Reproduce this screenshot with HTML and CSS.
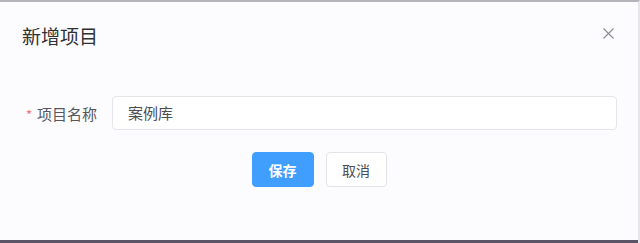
FILE: index.html
```html
<!DOCTYPE html>
<html lang="zh-CN">
<head>
<meta charset="utf-8">
<title>新增项目</title>
<link rel="stylesheet" href="styles.css">
</head>
<body>
<div class="dialog">
  <div class="dialog-header">
    <span class="dialog-title">新增项目</span>
    <button class="close-btn" aria-label="关闭">
      <svg width="11" height="11" viewBox="0 0 11 11"><path d="M0.5 0.5L10.5 10.5M10.5 0.5L0.5 10.5" stroke="#8a8c92" stroke-width="1.1" fill="none"/></svg>
    </button>
  </div>
  <div class="dialog-body">
    <div class="form-row">
      <label class="form-label"><span class="req">*</span>项目名称</label>
      <div class="input-box">案例库</div>
    </div>
  </div>
  <div class="dialog-footer">
    <button class="btn btn-primary">保存</button>
    <button class="btn btn-default">取消</button>
  </div>
  <div class="bottom-bar"></div>
</div>
</body>
</html>
```
FILE: styles.css
```css
html, body {
  margin: 0;
  padding: 0;
  background: #fcfcfe;
}
body {
  font-family: "Noto Sans CJK SC", "Noto Sans", sans-serif;
}
.dialog {
  width: 640px;
  height: 243px;
  box-sizing: border-box;
  border-top: 2px solid #b4b4bb;
  border-right: 2px solid #e6e6ea;
  background: #fcfcfe;
  display: flex;
  flex-direction: column;
}
.dialog-header {
  display: flex;
  justify-content: space-between;
  align-items: flex-start;
  padding: 18px 24px 0 22px;
}
.dialog-title {
  font-size: 19px;
  line-height: 32px;
  color: #303133;
}
.close-btn {
  border: 0;
  background: none;
  padding: 0;
  margin-top: 8px;
  width: 11px;
  height: 11px;
  display: flex;
}
.dialog-body {
  padding: 44px 21px 0 0;
}
.form-row {
  display: flex;
  align-items: center;
  height: 34px;
}
.form-label {
  width: 100px;
  box-sizing: border-box;
  padding-right: 3px;
  text-align: right;
  font-size: 15px;
  color: #55575c;
}
.req {
  color: #f56c6c;
  margin-right: 5px;
  font-size: 13px;
}
.input-box {
  flex: 1;
  margin-left: 12px;
  height: 34px;
  box-sizing: border-box;
  border: 1px solid #e4e6eb;
  border-radius: 4px;
  background: #ffffff;
  padding-left: 15px;
  font-size: 15px;
  line-height: 32px;
  color: #4a4c52;
}
.dialog-footer {
  display: flex;
  justify-content: center;
  gap: 12px;
  padding-top: 22px;
}
.btn {
  height: 35px;
  width: 62px;
  border-radius: 4px;
  font-family: inherit;
  font-size: 14px;
  padding: 0;
  cursor: pointer;
}
.btn-primary {
  background: #409eff;
  border: 1px solid #409eff;
  color: #ffffff;
  font-weight: bold;
}
.btn-default {
  width: 61px;
  background: #ffffff;
  border: 1px solid #e2e4e9;
  color: #4a4c52;
}
.bottom-bar {
  margin-top: auto;
  height: 3px;
  background: #5a5466;
}
```
